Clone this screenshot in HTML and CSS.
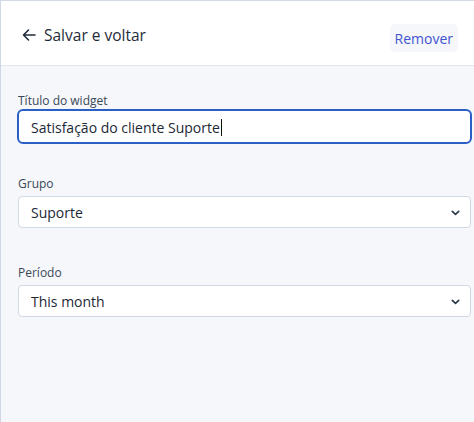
FILE: index.html
```html
<!DOCTYPE html>
<html lang="pt">
<head>
<meta charset="utf-8">
<title>Widget</title>
<link rel="stylesheet" href="styles.css">
</head>
<body>
<div class="panel">
  <header class="header">
    <button class="back">
      <svg class="back-icon" width="16" height="16" viewBox="0 0 16 16" fill="none" stroke="currentColor" stroke-width="1.6" stroke-linecap="round" stroke-linejoin="round"><path d="M14 8H2.5M7.5 3L2.5 8l5 5"/></svg>
      <span>Salvar e voltar</span>
    </button>
    <button class="remove">Remover</button>
  </header>
  <main class="form">
    <div class="field field-title">
      <label class="label">Título do widget</label>
      <div class="input focused"><span>Satisfação do cliente Suporte</span><span class="caret"></span></div>
    </div>
    <div class="field">
      <label class="label">Grupo</label>
      <div class="select"><span>Suporte</span>
        <svg class="chev" width="9" height="6" viewBox="0 0 9 6" fill="none" stroke="currentColor" stroke-width="1.7" stroke-linecap="round" stroke-linejoin="round"><path d="M1.3 1.3L4.5 4.4l3.2-3.1"/></svg>
      </div>
    </div>
    <div class="field">
      <label class="label">Período</label>
      <div class="select"><span>This month</span>
        <svg class="chev" width="9" height="6" viewBox="0 0 9 6" fill="none" stroke="currentColor" stroke-width="1.7" stroke-linecap="round" stroke-linejoin="round"><path d="M1.3 1.3L4.5 4.4l3.2-3.1"/></svg>
      </div>
    </div>
  </main>
</div>
</body>
</html>
```
FILE: styles.css
```css
* { box-sizing: border-box; }
html, body { margin: 0; padding: 0; height: 100%; }
body {
  font-family: "Open Sans", "Noto Sans", sans-serif;
  background: #f5f7fa;
  color: #1c2836;
}
.panel {
  min-height: 100%;
  border-left: 1px solid #cfd8e3;
  border-top: 1px solid #d3dae3;
  background: #f5f7fa;
}
.header {
  height: 65px;
  background: #fff;
  border-bottom: 1px solid #e0e6ed;
  display: flex;
  align-items: center;
  justify-content: space-between;
  padding: 0 16px 0 20px;
}
.back {
  display: flex;
  align-items: center;
  gap: 7px;
  border: 0;
  background: none;
  padding: 0;
  font: inherit;
  font-size: 15.5px;
  color: #1f2b3a;
  margin-top: 4px;
}
.back-icon { color: #1f2b3a; }
.remove {
  border: 0;
  background: #f5f7fa;
  border-radius: 5px;
  font: inherit;
  font-size: 14px;
  font-weight: 500;
  color: #4354d0;
  height: 28px;
  padding: 0 5px;
  margin-top: 10px;
}
.form {
  padding: 27px 2px 0 16px;
}
.field { margin-bottom: 37px; }
.field-title { margin-bottom: 32px; }
.label {
  display: block;
  font-size: 12px;
  line-height: 16px;
  color: #3a4859;
  padding-left: 1px;
}
.input {
  height: 35px;
  border: 2px solid #2b5fc8;
  border-radius: 6px;
  background: #fff;
  display: flex;
  align-items: center;
  padding: 1px 12px 0;
  font-size: 14px;
  color: #1c2836;
}
.caret {
  display: inline-block;
  width: 1px;
  height: 17px;
  background: #111;
  margin-left: 1px;
}
.select {
  height: 32px;
  margin: 4px 1px 0;
  border: 1px solid #cfd8e3;
  border-radius: 4px;
  background: #fff;
  display: flex;
  align-items: center;
  justify-content: space-between;
  padding: 1px 10px 0 12px;
  font-size: 14px;
  color: #1c2836;
}
.chev { color: #2d3a4a; }
```
